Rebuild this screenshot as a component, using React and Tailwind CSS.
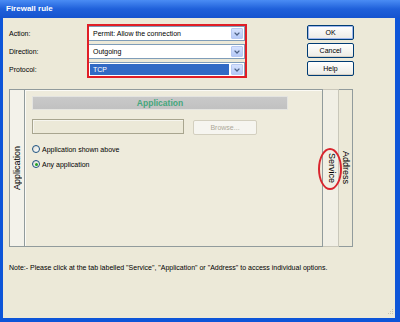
import React from 'react';

const Select = ({ value, selected }) => (
  <div className="h-[15px] flex border border-[#7f9db9] bg-white">
    <div className="flex-1 flex p-[1px]">
      <div
        className={`w-full h-full flex items-center pl-[3px] ${
          selected ? 'bg-[#316ac5] text-white' : 'text-black'
        }`}
      >
        {value}
      </div>
    </div>
    <div className="w-[12px] m-[1px] rounded-[1px] border border-[#b7c9f2] bg-linear-to-b from-[#d6e2fd] to-[#b5c9f7] flex items-center justify-center">
      <svg width="6" height="4" viewBox="0 0 6 4">
        <path d="M0.6 0.6 L3 3 L5.4 0.6" stroke="#4d6185" strokeWidth="1.3" fill="none" />
      </svg>
    </div>
  </div>
);

const Button = ({ children, isDefault }) => (
  <div
    className={`h-[15px] flex items-center justify-center rounded-[2px] border border-[#003c74] bg-linear-to-b from-white to-[#ecebe4] ${
      isDefault ? 'shadow-[inset_0_0_0_1px_#9fb7ec]' : 'shadow-[inset_0_-1px_0_#d6d0c5]'
    }`}
  >
    {children}
  </div>
);

const Radio = ({ label, checked }) => (
  <div className="h-[10px] flex items-center">
    <div className="w-[8px] h-[8px] rounded-full border border-[#1c5180] bg-linear-to-br from-[#dcdcd4] to-white flex items-center justify-center">
      {checked && <div className="w-[3px] h-[3px] rounded-full bg-[#21a121]" />}
    </div>
    <span className="ml-[2px]">{label}</span>
  </div>
);

export default function App() {
  return (
    <div className="relative w-[400px] h-[322px] flex flex-col font-['Liberation_Sans',Arial,sans-serif] text-[7px] leading-none text-black">
      {/* title bar */}
      <div className="h-[18px] flex items-center pl-[6px] bg-linear-to-b from-[#4a8cf4] via-[#1f60da] to-[#1553cf]">
        <span className="text-white font-bold text-[8px]">Firewall rule</span>
      </div>

      <div className="flex-1 flex flex-col bg-[#ece9d8] border-l-[3px] border-r-[5px] border-b-[4px] border-[#0d55d8] pl-[6px]">
        {/* rule fields */}
        <div className="flex pt-[8px]">
          <div className="w-[79px] flex flex-col gap-[3px]">
            <div className="h-[15px] flex items-center">Action:</div>
            <div className="h-[15px] flex items-center">Direction:</div>
            <div className="h-[15px] flex items-center">Protocol:</div>
          </div>
          <div className="w-[157px] flex flex-col gap-[3px]">
            <Select value="Permit: Allow the connection" />
            <Select value="Outgoing" />
            <Select value="TCP" selected />
          </div>
          <div className="ml-[62px] w-[47px] flex flex-col gap-[3px] -mt-[1px]">
            <Button isDefault>OK</Button>
            <Button>Cancel</Button>
            <Button>Help</Button>
          </div>
        </div>

        {/* tabs */}
        <div className="mt-[12px] w-[344px] h-[158px] flex">
          <div className="w-[15px] border-y border-l border-[#919b9c] bg-[#f3f2ea] flex items-center justify-center">
            <span className="[writing-mode:vertical-rl] rotate-180 text-[9px]">Application</span>
          </div>
          <div className="flex-1 border border-[#919b9c] bg-[#eeebdc] shadow-[inset_1px_1px_0_#fbfaf5] pt-[6px] pl-[7px] flex flex-col">
            <div className="w-[256px] h-[14px] border border-[#e4e4e0] bg-linear-to-b from-[#c9c9c9] to-[#c1c1c1] flex items-center justify-center">
              <span className="text-[8.5px] font-bold text-[#45a67c]">Application</span>
            </div>
            <div className="mt-[9px] flex">
              <div className="w-[152px] h-[15px] border border-[#a8a58f] bg-[#ece9d8] shadow-[inset_1px_1px_0_#f6f5ee]" />
              <div className="ml-[9px] mt-[1px] w-[64px] h-[15px] rounded-[2px] border border-[#d3cfbf] bg-[#f6f5f0] flex items-center justify-center text-[#aca899]">
                Browse...
              </div>
            </div>
            <div className="mt-[9px]">
              <Radio label="Application shown above" />
            </div>
            <div className="mt-[5px]">
              <Radio label="Any application" checked />
            </div>
          </div>
          <div className="w-[16px] border-y border-r border-[#c9c7ba] bg-[#f1efe5] flex items-center justify-center">
            <span className="[writing-mode:vertical-rl] text-[9px] pl-[1px]">Service</span>
          </div>
          <div className="w-[14px] border-y border-r border-[#919b9c] bg-[#ece9d8] flex items-center justify-center">
            <span className="[writing-mode:vertical-rl] text-[9px]">Address</span>
          </div>
        </div>

        <p className="mt-[17px]">
          Note:- Please click at the tab labelled "Service", "Application" or "Address" to access individual options.
        </p>
      </div>

      {/* annotation marks */}
      <div className="absolute left-[87px] top-[24px] w-[160px] h-[54px] border-2 border-[#e01e26]" />
      <div className="absolute left-[318px] top-[148px] w-[24px] h-[42px] rounded-[50%] border-2 border-[#d9252e]" />

      {/* resize grip */}
      <svg className="absolute left-[386px] top-[308px]" width="8" height="8" viewBox="0 0 8 8">
        <g fill="#c5c2b2">
          <rect x="6" y="1" width="1" height="1" />
          <rect x="4" y="3" width="1" height="1" />
          <rect x="6" y="3" width="1" height="1" />
          <rect x="2" y="5" width="1" height="1" />
          <rect x="4" y="5" width="1" height="1" />
          <rect x="6" y="5" width="1" height="1" />
        </g>
      </svg>
    </div>
  );
}
